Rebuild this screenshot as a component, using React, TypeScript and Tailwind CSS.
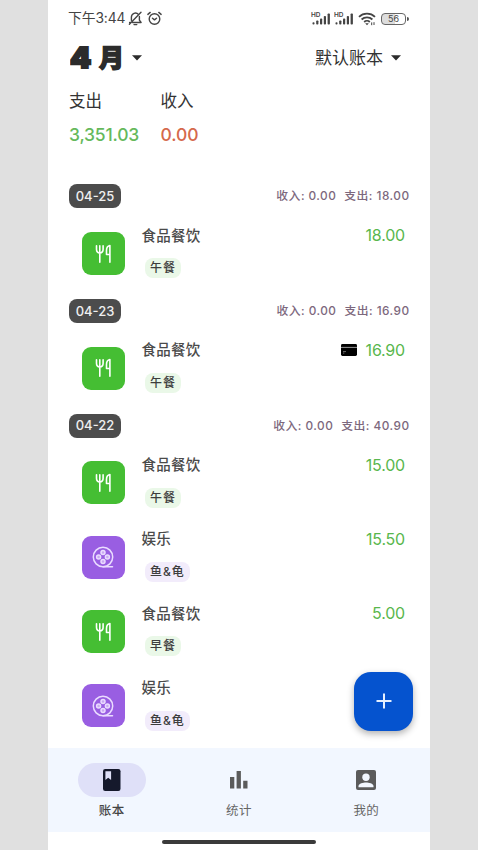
import { useState } from "react";
import clsx from "clsx";

type Entry = { kind: "food" | "fun"; title: string; tag: string; amount: string; card?: boolean };
type Day = { date: string; income: string; expense: string; entries: Entry[] };

const days: Day[] = [
  { date: "04-25", income: "0.00", expense: "18.00", entries: [{ kind: "food", title: "食品餐饮", tag: "午餐", amount: "18.00" }] },
  { date: "04-23", income: "0.00", expense: "16.90", entries: [{ kind: "food", title: "食品餐饮", tag: "午餐", amount: "16.90", card: true }] },
  {
    date: "04-22",
    income: "0.00",
    expense: "40.90",
    entries: [
      { kind: "food", title: "食品餐饮", tag: "午餐", amount: "15.00" },
      { kind: "fun", title: "娱乐", tag: "鱼&龟", amount: "15.50" },
      { kind: "food", title: "食品餐饮", tag: "早餐", amount: "5.00" },
      { kind: "fun", title: "娱乐", tag: "鱼&龟", amount: "" },
    ],
  },
];

const Caret = () => (
  <svg width="10" height="6" viewBox="0 0 10 6" fill="#2b2b2b"><path d="M0 .3h10L5 5.6z" /></svg>
);

const Signal = () => (
  <svg width="20" height="14" viewBox="0 0 20 14" fill="#444">
    <rect x="1.5" y="10.2" width="2" height="2.3" rx=".8" />
    <rect x="5.2" y="8.4" width="2.2" height="4.1" rx=".8" />
    <rect x="9" y="6.4" width="2.2" height="6.1" rx=".8" />
    <rect x="12.8" y="4" width="2.2" height="8.5" rx=".8" />
    <rect x="16.6" y="1.4" width="2.3" height="11.1" rx=".8" />
    <text x="0" y="4.8" fontSize="6" fontWeight="600" textLength="9.5" lengthAdjust="spacingAndGlyphs">HD</text>
  </svg>
);

function StatusBar() {
  return (
    <div className="flex h-9 items-center justify-between pr-[21px] pl-5 text-[#444]">
      <div className="flex items-center">
        <span className="w-[59px] text-[13.8px] tracking-[-0.1px] whitespace-nowrap">下午3:44</span>
        <svg className="ml-px" width="15" height="15" viewBox="0 0 15 15" fill="none" stroke="#444" strokeWidth="1.4" strokeLinecap="round" strokeLinejoin="round">
          <path d="M3.4 9.2V6a4 4 0 0 1 7-2.6M11.4 5.5v3.6l1.7 2.4H4.6M1.6 11.5h.8M6 13.6h2.8M13 1.2 1.4 13.2" />
        </svg>
        <svg className="ml-[4px]" width="15" height="15" viewBox="0 0 15 15" fill="none" stroke="#444" strokeWidth="1.4" strokeLinecap="round" strokeLinejoin="round">
          <circle cx="7.5" cy="8" r="5.3" />
          <path d="M5.5 7.3l2 1.6 2-1.6M.9 3.4 3.2 1.4M14.1 3.4l-2.3-2" />
        </svg>
      </div>
      <div className="flex items-center pt-px">
        <Signal />
        <span className="w-[3px]" />
        <Signal />
        <svg className="ml-1" width="19" height="14" viewBox="0 0 19 14" fill="none" stroke="#444" strokeWidth="1.8">
          <path d="M1 4.8a11.5 11.5 0 0 1 16 0M3.6 7.5a7.8 7.8 0 0 1 10.8 0M6.2 10a4 4 0 0 1 5.6 0" />
          <path d="M7.2 11.2h3.6L9 13.2z" fill="#444" stroke="none" />
          <path d="M13.7 10.4v2.8M16 10.2V13" strokeWidth="1" />
        </svg>
        <div className="ml-1 flex h-[12px] w-[25px] items-center justify-center rounded-[4px] border border-[#666] bg-[linear-gradient(90deg,#ddd_56%,#fff_56%)] text-[9px] leading-none">56</div>
        <span className="ml-px h-1 w-[2px] rounded-r bg-[#555]" />
      </div>
    </div>
  );
}

const FoodIcon = () => (
  <svg width="17" height="20" viewBox="0 0 17 20" fill="none" stroke="#fff" strokeLinecap="round" strokeLinejoin="round">
    <path d="M1.5 1.7v3.6q0 3.6 3.3 3.6t3.3-3.6V1.7M4.8 1.7v16.5" strokeWidth="1.6" />
    <path d="M14.9 18.2V1.5q-3.4.7-3.4 5v4h3.4" strokeWidth="1.6" />
  </svg>
);

const FilmIcon = () => (
  <svg width="22" height="22" viewBox="0 0 22 22" fill="none" stroke="#eadcff" strokeWidth="1.5" strokeLinecap="round">
    <circle cx="11" cy="11" r="9.7" />
    <g fill="#c9a9f2">
      <circle cx="11" cy="6.6" r="2" />
      <circle cx="11" cy="15.4" r="2" />
      <circle cx="6.6" cy="11" r="2" />
      <circle cx="15.4" cy="11" r="2" />
    </g>
    <path d="M11 20.7h9.5" />
  </svg>
);

const CardIcon = () => (
  <svg width="16" height="12" viewBox="0 0 16 12">
    <rect width="16" height="12" rx="1.4" fill="#000" />
    <path d="M0 3.4h16" stroke="#999" strokeWidth="1" />
    <path d="M2 7.6h3M2 9.1h1.3" stroke="#999" strokeWidth=".7" />
  </svg>
);

function EntryRow({ entry }: { entry: Entry }) {
  const food = entry.kind === "food";
  return (
    <div className="flex h-[74.3px] pr-[25px] pl-[33.5px]">
      <div className={clsx("mt-[15.7px] flex size-[43px] items-center justify-center rounded-[9px]", food ? "bg-[#45be33]" : "bg-[#995ee2]")}>
        {food ? <FoodIcon /> : <FilmIcon />}
      </div>
      <div className="ml-[17px] flex-1 pt-[8.4px]">
        <p className="text-[14.5px] leading-[22px] font-medium tracking-[0.25px] text-[#4a4a4a]">{entry.title}</p>
        <span className={clsx("mt-[11.6px] ml-[3px] inline-flex h-[20px] items-center rounded-[8px] px-[5.5px] text-[12px] font-medium tracking-[0.9px] text-[#3d3d3d]", food ? "bg-[#eaf8e8]" : "bg-[#f2ecfb]")}>
          {entry.tag}
        </span>
      </div>
      <div className="flex h-[22px] translate-y-2 items-center gap-[9px] text-[16px] text-[#59b74d]">
        {entry.card && <CardIcon />}
        <span className="tracking-[-0.2px]">{entry.amount}</span>
      </div>
    </div>
  );
}

const BookIcon = () => (
  <svg width="18" height="22" viewBox="0 0 18 22">
    <rect width="17.5" height="22" rx="2.2" fill="#15192c" />
    <path d="M2.4 2.2h5.7v8.7L5.2 8.7l-2.8 2.2z" fill="#dfe0f8" />
  </svg>
);

const StatsIcon = () => (
  <svg width="18" height="18" viewBox="0 0 18 18" fill="#5b5b5b">
    <path d="M0 6h4.3v11.5H0zM6.6 0h4.3v17.5H6.6zM13.2 9.8h4.3v7.7h-4.3z" />
  </svg>
);

const MeIcon = () => (
  <svg width="20" height="20" viewBox="0 0 20 20">
    <rect width="20" height="20" rx="2" fill="#5b5b5b" />
    <circle cx="10" cy="7.2" r="3.7" fill="#f2f7ff" />
    <path d="M2.5 17.3v-1.2c0-2.5 4.8-3.6 7.5-3.6s7.5 1.1 7.5 3.6v1.2z" fill="#f2f7ff" />
  </svg>
);

const tabs = [
  { label: "账本", icon: <BookIcon /> },
  { label: "统计", icon: <StatsIcon /> },
  { label: "我的", icon: <MeIcon /> },
];

export default function App() {
  const [active, setActive] = useState(0);

  return (
    <div className="flex h-[850px] justify-center bg-[#e0e0e0] font-['Inter','Noto_Sans_CJK_SC',sans-serif]" lang="zh-CN">
      <div className="relative flex w-[382px] flex-col overflow-hidden bg-white">
        <StatusBar />

        <div className="flex h-[44px] items-center justify-between pr-[29px] pl-[21px]">
          <button className="flex items-center text-[#2b2b2b]">
            <span className="w-[30px] pl-px text-left text-[28px] leading-none font-black [-webkit-text-stroke:2px_#2b2b2b]">
              <span className="inline-block origin-left scale-x-108">4</span>
            </span>
            <span className="w-[33px] text-left text-[25px] leading-none font-black [-webkit-text-stroke:1.4px_#2b2b2b]">月</span>
            <Caret />
          </button>
          <button className="flex items-center gap-[8px] text-[17px] text-[#333]">
            <span className="translate-y-px">默认账本</span> <Caret />
          </button>
        </div>

        <div className="flex h-[96px] pt-[9px] pl-[21px]">
          <div className="w-[91.5px]">
            <p className="text-[16.5px] leading-6 text-[#333]">支出</p>
            <p className="mt-[10px] text-[17.5px] leading-6 font-medium tracking-[-0.2px] text-[#65b95c]">3,351.03</p>
          </div>
          <div>
            <p className="text-[16.5px] leading-6 text-[#333]">收入</p>
            <p className="mt-[10px] text-[17.5px] leading-6 font-medium tracking-[-0.1px] text-[#d5694c]">0.00</p>
          </div>
        </div>

        <div className="flex-1">
          {days.map((day) => (
            <section key={day.date}>
              <div className="flex h-[40.4px] items-center justify-between pr-[21px] pl-[21px]">
                <span className="flex h-6 w-[52px] items-center justify-center rounded-[8px] bg-[#4c4c4c] pt-px text-[13px] font-medium text-[#f0f0f0]">{day.date}</span>
                <span className="flex translate-y-px gap-[8px] text-[11.8px] font-medium tracking-[0.48px] text-[#7d687d]">
                  <span>收入: {day.income}</span>
                  <span className="-mr-[0.5px]">支出: {day.expense}</span>
                </span>
              </div>
              {day.entries.map((entry, i) => <EntryRow key={i} entry={entry} />)}
            </section>
          ))}
        </div>

        <button className="absolute top-[671.5px] right-[17px] flex size-[59px] items-center justify-center rounded-[17px] bg-[#0553cf] shadow-[0_3px_7px_rgba(0,0,0,0.3)]">
          <svg width="16" height="16" viewBox="0 0 16 16" stroke="#e6f0ff" strokeWidth="2"><path d="M8 .5v15M.5 8h15" /></svg>
        </button>

        <nav className="z-10 flex h-[84px] shrink-0 bg-[#f2f7ff]">
          {tabs.map((tab, i) => (
            <button key={tab.label} onClick={() => setActive(i)} className="flex flex-1 flex-col items-center pt-[15px]">
              <span className={clsx("flex h-[34px] w-[68px] items-center justify-center rounded-full", active === i && "bg-[#dfe0f8]")}>{tab.icon}</span>
              <span className={clsx("mt-[5px] text-[12.5px] leading-[18px] tracking-[0.4px]", active === i ? "font-medium text-[#444]" : "text-[#666]")}>{tab.label}</span>
            </button>
          ))}
        </nav>
        <div className="flex h-[18px] shrink-0 justify-center bg-white pt-[7.5px]">
          <div className="h-1 w-[154px] rounded-full bg-[#3a3a3a]" />
        </div>
      </div>
    </div>
  );
}
